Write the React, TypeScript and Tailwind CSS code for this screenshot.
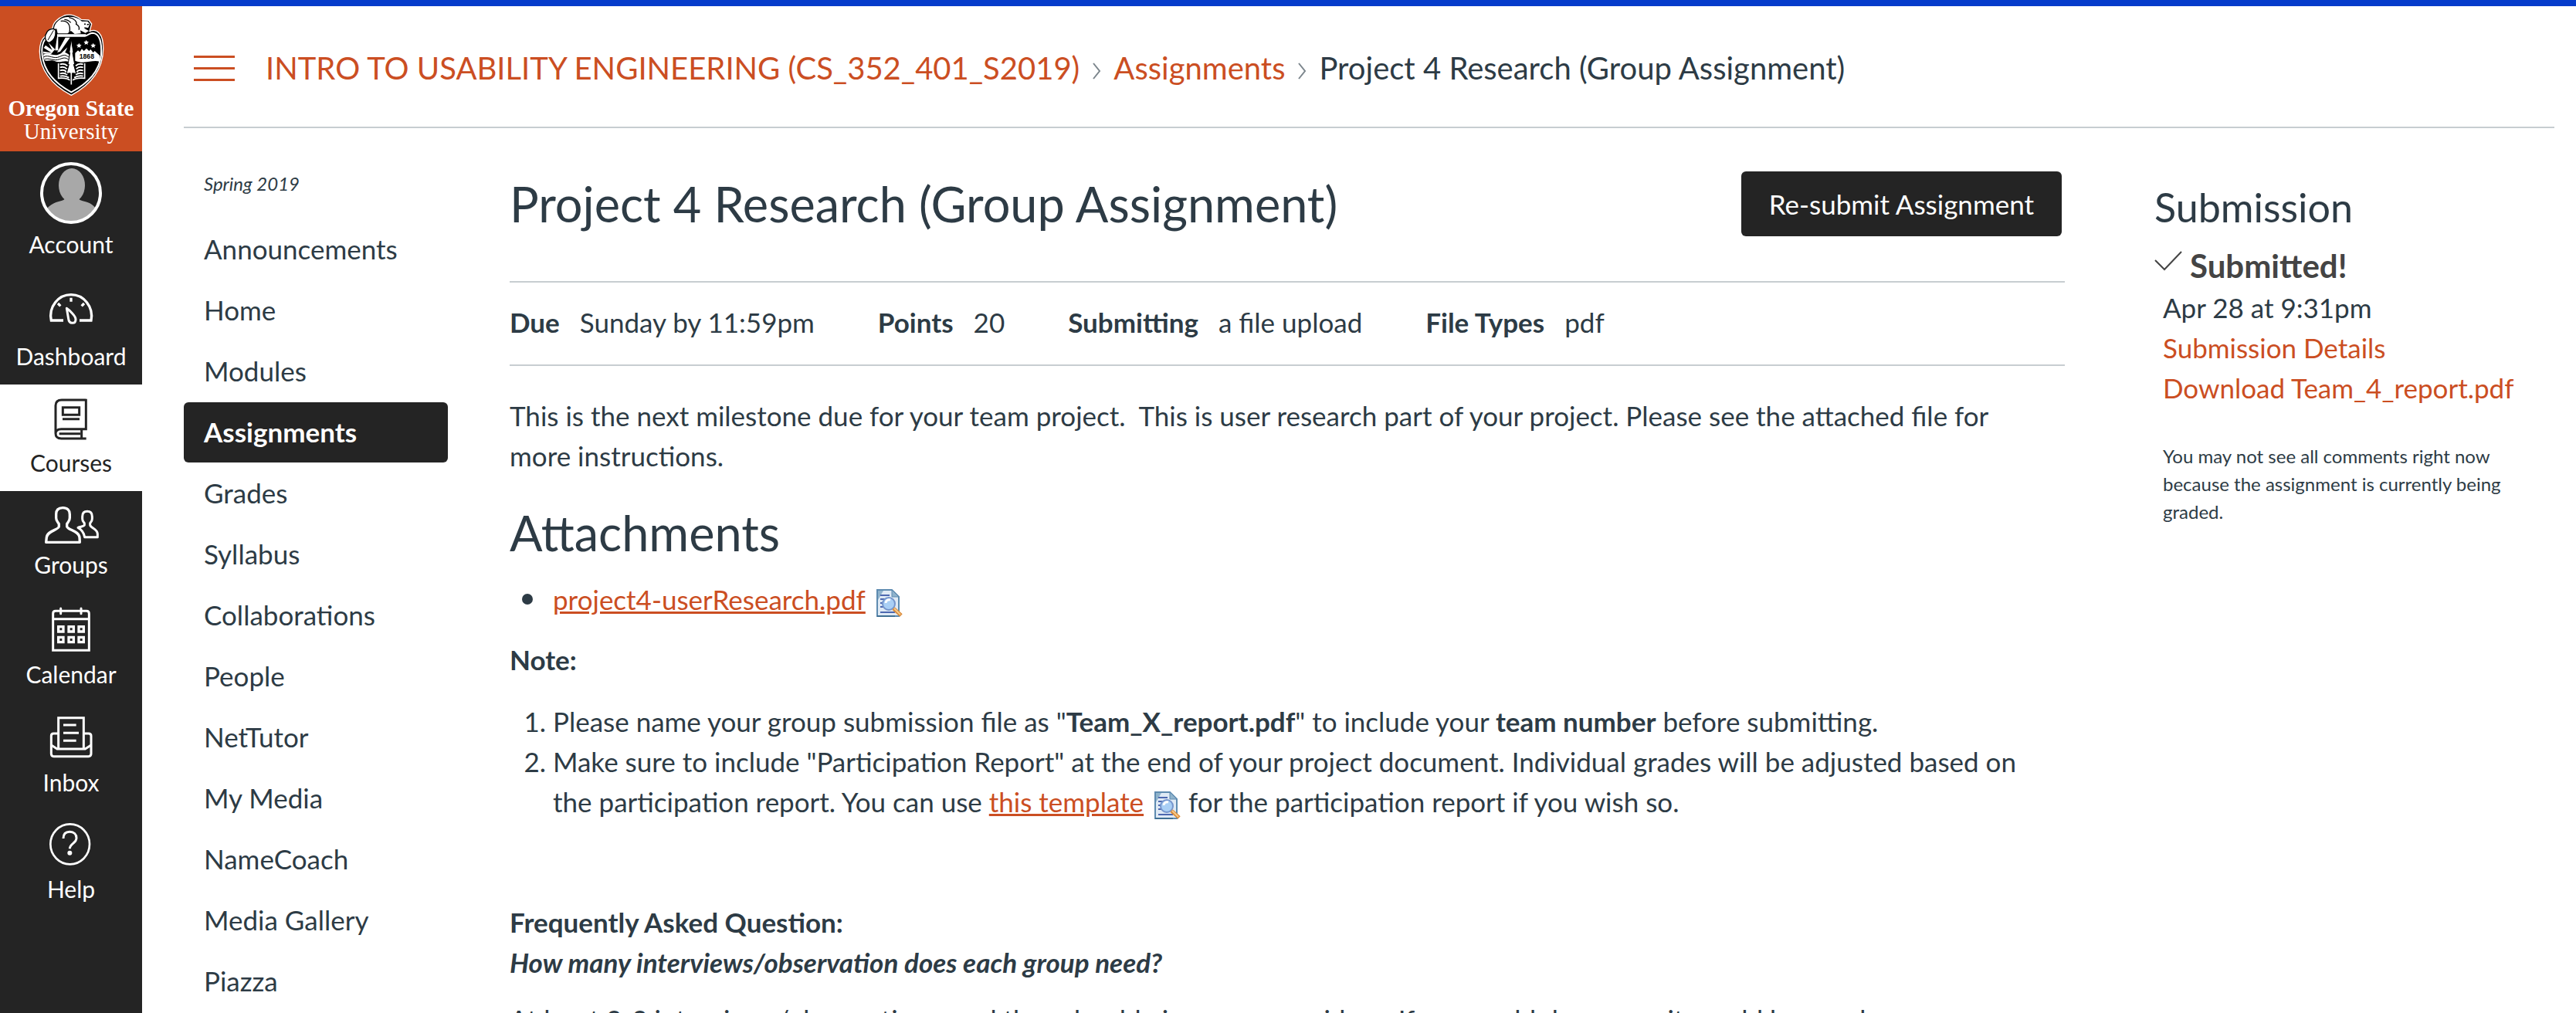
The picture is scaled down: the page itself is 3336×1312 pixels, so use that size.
import type { ReactNode } from 'react';

function Crest() {
  return (
    <svg viewBox="144 48 264 327" className="h-[109px] w-[88px] shrink-0" aria-hidden="true">
      <path d="M176 140 C182 125 195 112 205 108 C205 90 225 70 250 60 C275 53 300 62 315 76 L345 78 L356 93 L348 122 C375 110 402 128 401 190 C400 265 362 325 277 370 C195 328 155 265 154 200 C154 172 163 150 176 140 Z" fill="#000" stroke="#fff" strokeWidth="4" strokeLinejoin="round" />
      <path d="M176 152 C163 168 161 190 164 215 C172 280 215 325 277 358 C340 325 385 280 393 215 C396 165 388 130 360 128 C345 128 345 138 330 140 L222 140" fill="none" stroke="#fff" strokeWidth="6" />
      <path d="M210 113 C210 92 230 72 255 67 C285 60 308 72 318 83 L340 83 L349 93 L343 107 L330 112 L345 120 L332 128 L312 118 L314 130 L290 132 L276 120 L262 130 L224 130 L220 112 Z" fill="#fff" />
      <path d="M268 68 C290 72 300 85 296 94 C306 98 310 108 306 116 M236 82 C262 78 276 96 270 126 M250 76 C262 76 270 82 275 88" fill="none" stroke="#000" strokeWidth="4" />
      <circle cx="330" cy="94" r="3" fill="#000" />
      <path d="M346 94 l-8 2 M340 110 l-12 -2" stroke="#000" strokeWidth="4" />
      <path d="M184 122 C192 112 208 108 216 118 C218 140 208 158 192 166 C178 164 174 150 176 138 Z" fill="#fff" stroke="#000" strokeWidth="4" />
      <path d="M208 118 L186 156" stroke="#000" strokeWidth="3" />
      <path d="M222 136 H334" stroke="#fff" strokeWidth="6" />
      <path d="M222 142 L214 196 L226 196 L226 142 Z M272 146 L234 200 L222 204 L254 146 Z M177 176 L208 198 L202 206 L170 186 Z M188 166 L214 192 L206 200 Z M168 200 L200 205 L200 210 L168 208 Z M262 184 L238 206 L250 210 Z" fill="#fff" />
      <path d="M168 212 C190 200 208 222 232 210 S258 208 268 212 L268 240 C250 232 232 246 214 238 S184 240 172 234 Z" fill="#fff" />
      <path d="M170 221 C190 210 208 232 232 220 S258 218 268 222 M172 231 C190 222 208 240 232 230 S258 228 268 232" fill="none" stroke="#000" strokeWidth="3" />
      <path d="M292 206 L303 196 L310 202 L318 190 L326 198 L336 188 L346 198 L352 192 L362 204 L368 198 L388 216 L388 240 C360 230 330 252 292 236 Z" fill="#fff" />
      <text x="337" y="228" textAnchor="middle" fontSize="26" fontWeight="700" fill="#000" className="font-['Liberation_Sans',sans-serif]">1868</text>
      <path d="M335 155 l3 6 7 1 -5 5 1 7 -6 -4 -6 4 1 -7 -5 -5 7 -1 Z M307 167 l3 6 7 1 -5 5 1 7 -6 -4 -6 4 1 -7 -5 -5 7 -1 Z M362 167 l3 6 7 1 -5 5 1 7 -6 -4 -6 4 1 -7 -5 -5 7 -1 Z" fill="#fff" />
      <path d="M227 246 L227 304 C245 302 260 302 277 314 C294 302 310 302 329 304 L329 246" fill="none" stroke="#fff" strokeWidth="5" />
      <path d="M233 250 C246 246 256 250 262 256 M233 262 C246 258 254 262 260 268 M233 274 C246 270 254 274 258 280 M233 286 C246 282 256 286 262 290 M233 296 C246 292 258 296 268 302 M323 250 C310 246 300 250 294 256 M323 262 C310 258 302 262 296 268 M323 274 C310 270 302 274 298 280 M323 286 C310 282 300 286 294 290 M323 296 C310 292 298 296 288 302" fill="none" stroke="#fff" strokeWidth="6" />
      <path d="M277 152 L285 205 L282 205 L290 250 L286 250 L296 286 L281 284 L281 330 L273 330 L273 284 L258 286 L268 250 L264 250 L272 205 L269 205 Z" fill="#fff" stroke="#000" strokeWidth="3" />
    </svg>
  );
}

function DashboardIcon() {
  return (
    <svg viewBox="156 129 240 180" className="h-[60px] w-[80px]" fill="none" stroke="currentColor" strokeWidth="10" aria-hidden="true">
      <path d="M246 258 H199 C188 205 226 158 276 158 C326 158 364 205 354 258 H309" />
      <path d="M276 170 V185 M225 192 L235 202 M327 192 L317 202" />
      <path d="M259 211 C268 217 294 240 294 254 C294 264 288 268 281 268 C272 268 267 261 266 252 Z" strokeWidth="9" strokeLinejoin="round" />
    </svg>
  );
}

function CoursesIcon() {
  return (
    <svg viewBox="156 558 240 162" className="h-[54px] w-[80px]" fill="none" stroke="currentColor" strokeWidth="9" aria-hidden="true">
      <path d="M334 564 H240 C224 564 216 572 216 586 V694 C216 708 224 714 238 714 H335 M334 560 V677 H238 C224 677 216 684 216 695 M317 677 V714" />
      <path d="M244 593 H308 V622 H244 Z M243 638 H309 M230 695 H313" />
    </svg>
  );
}

function GroupsIcon() {
  return (
    <svg viewBox="156 972 240 144" className="h-[48px] w-[80px] overflow-visible" fill="none" stroke="currentColor" strokeWidth="10" strokeLinejoin="round" aria-hidden="true">
      <path d="M244 983 C226 983 218 993 218 1008 V1022 C218 1034 224 1038 229 1046 V1056 C226 1070 184 1072 181 1098 L179 1117 H310 L309 1098 C306 1072 264 1070 260 1056 V1046 C265 1038 271 1034 271 1022 V1008 C271 993 262 983 244 983 Z" />
      <path d="M339 997 C326 997 320 1005 320 1017 V1026 C320 1034 324 1037 328 1043 V1050 C326 1056 312 1056 303 1060 C318 1068 326 1080 329 1097 H379 V1084 C377 1064 352 1062 350 1050 V1043 C354 1037 358 1034 358 1026 V1017 C358 1005 352 997 339 997 Z" strokeWidth="9" />
    </svg>
  );
}

function CalendarIcon() {
  return (
    <svg viewBox="156 108 240 174" className="h-[58px] w-[80px]" fill="none" stroke="currentColor" strokeWidth="9" aria-hidden="true">
      <path d="M206 277 V134 C206 128 210 124 216 124 H336 C342 124 346 128 346 134 V277 Z M206 155 H346" />
      <path d="M236 114 V134 M315 114 V134" strokeLinecap="round" />
      <path d="M227 185 h19 v19 h-19 Z M267 185 h19 v19 h-19 Z M306 185 h19 v19 h-19 Z M227 226 h19 v19 h-19 Z M267 226 h19 v19 h-19 Z M306 226 h19 v19 h-19 Z" strokeWidth="10" />
    </svg>
  );
}

function InboxIcon() {
  return (
    <svg viewBox="156 534 240 168" className="h-[56px] w-[80px]" fill="none" stroke="currentColor" strokeWidth="9" aria-hidden="true">
      <path d="M227 660 V539 H325 V660 M227 600 H208 C202 600 199 604 199 609 V679 C199 685 202 689 208 689 H344 C350 689 354 685 354 679 V609 C354 604 350 600 344 600 H325" />
      <path d="M199 645 L222 660 H331 L354 645 M246 567 H296 M246 598 H306 M246 628 H296" />
    </svg>
  );
}

function HelpIcon() {
  return (
    <svg viewBox="156 954 240 162" className="h-[54px] w-[80px] overflow-visible" fill="none" stroke="currentColor" strokeWidth="8" aria-hidden="true">
      <ellipse cx="272" cy="1030" rx="76" ry="78" />
      <path d="M246 1008 C246 990 256 982 271 982 C287 982 297 992 297 1006 C297 1028 271 1026 271 1048" strokeWidth="9" />
      <circle cx="271" cy="1064" r="9" fill="currentColor" stroke="none" />
    </svg>
  );
}

function Avatar() {
  return (
    <svg viewBox="0 0 80 80" className="h-20 w-20" aria-hidden="true">
      <defs>
        <clipPath id="avatar-clip"><circle cx="40" cy="40" r="37" /></clipPath>
      </defs>
      <g clipPath="url(#avatar-clip)" fill="#a8a8a8">
        <ellipse cx="41" cy="30" rx="17" ry="22" />
        <path d="M33 42 H49 C49 50 52 49 58 51 C70 54 76 62 80 80 H0 C4 62 12 54 24 51 C30 49 33 50 33 42 Z" />
      </g>
      <circle cx="40" cy="40" r="38" fill="none" stroke="#fff" strokeWidth="4" />
    </svg>
  );
}

function PreviewIcon() {
  return (
    <svg viewBox="0 0 35 36" className="ml-3.5 inline-block h-9 w-[35px] align-middle" role="img" aria-label="Preview document">
      <path d="M1 1 H20 L29 10 V35 H1 Z" fill="#dfeaf5" stroke="#5e8bb0" strokeWidth="2" />
      <path d="M2 2 H9 L2 14 Z" fill="#8fb3cc" />
      <path d="M20 1 V10 H29 Z" fill="#8fb3cc" stroke="#5e8bb0" />
      <path d="M5 8 H17 M5 13 H14 M5 18 H11 M5 23 H12 M5 30 H24" stroke="#4d68b0" strokeWidth="2" />
      <circle cx="16" cy="19" r="8" fill="#a9cff5" stroke="#7595cc" strokeWidth="2" />
      <path d="M12 18 C12 15 15 13 18 14" stroke="#fff" strokeWidth="3" fill="none" />
      <path d="M22 25 L32 34" stroke="#d98a3a" strokeWidth="5" />
      <path d="M23 25 L31 33" stroke="#f6c988" strokeWidth="2" />
      <path d="M1 35 H24" stroke="#3f6f93" strokeWidth="2" />
    </svg>
  );
}

const globalNav: { label: string; icon: ReactNode; active?: boolean }[] = [
  { label: 'Dashboard', icon: <DashboardIcon /> },
  { label: 'Courses', icon: <CoursesIcon />, active: true },
  { label: 'Groups', icon: <GroupsIcon /> },
  { label: 'Calendar', icon: <CalendarIcon /> },
  { label: 'Inbox', icon: <InboxIcon /> },
  { label: 'Help', icon: <HelpIcon /> },
];

const courseNav = [
  'Announcements', 'Home', 'Modules', 'Assignments', 'Grades', 'Syllabus', 'Collaborations',
  'People', 'NetTutor', 'My Media', 'NameCoach', 'Media Gallery', 'Piazza',
];

const details = [
  ['Due', 'Sunday by 11:59pm'],
  ['Points', '20'],
  ['Submitting', 'a file upload'],
  ['File Types', 'pdf'],
];

function GlobalNav() {
  return (
    <nav aria-label="Global" className="w-[184px] shrink-0 bg-[#242424] text-[30px] leading-9 text-white">
      <a href="#home" className="flex h-[188px] flex-col items-center bg-[#cb4e22] pt-2 font-['Liberation_Serif',serif] text-[29px] leading-[30px]">
        <Crest />
        <span className="font-bold whitespace-nowrap">Oregon State</span>
        <span>University</span>
      </a>
      <a href="#account" className="flex flex-col items-center gap-2 pt-3.5 pb-5">
        <Avatar />
        Account
      </a>
      {globalNav.map((item) => (
        <a
          key={item.label}
          href={'#' + item.label.toLowerCase()}
          className={
            item.active
              ? 'flex flex-col items-center gap-[11px] bg-white pt-[18px] pb-[19px] text-[#242424]'
              : 'flex flex-col items-center gap-[11px] pt-[18px] pb-[19px]'
          }
        >
          {item.icon}
          {item.label}
        </a>
      ))}
    </nav>
  );
}

function Chevron() {
  return (
    <svg viewBox="0 0 12 22" className="mx-4 mt-2 h-[22px] w-3" fill="none" stroke="#7b858c" strokeWidth="2" aria-hidden="true">
      <path d="M2 1 L10 11 L2 21" />
    </svg>
  );
}

function Header() {
  return (
    <header className="flex h-[158px] items-center border-b-2 border-[#c7cdd1] pt-1 pl-[13px] text-[40px] leading-[52px]">
      <button type="button" aria-label="Toggle course navigation" className="mr-10 flex w-[53px] flex-col gap-3">
        <span className="h-[3px] bg-[#cb4e22]" />
        <span className="h-[3px] bg-[#cb4e22]" />
        <span className="h-[3px] bg-[#cb4e22]" />
      </button>
      <nav aria-label="Breadcrumb" className="flex items-center">
        <a href="#course" className="text-[#cb4e22]">INTRO TO USABILITY ENGINEERING (CS_352_401_S2019)</a>
        <Chevron />
        <a href="#assignments" className="text-[#cb4e22]">Assignments</a>
        <Chevron />
        <span>Project 4 Research (Group Assignment)</span>
      </nav>
    </header>
  );
}

function CourseNav() {
  return (
    <nav aria-label="Course" className="w-[342px] shrink-0 pt-[54px]">
      <p className="pl-[26px] text-[24px] leading-9 italic">Spring 2019</p>
      <ul className="mt-7 flex flex-col gap-px">
        {courseNav.map((label) => (
          <li key={label}>
            <a
              href={'#' + label}
              className={
                label === 'Assignments'
                  ? 'block rounded-md bg-[#242424] px-[26px] pt-3 pb-3.5 font-bold text-white'
                  : 'block px-[26px] pt-3 pb-3.5'
              }
            >
              {label}
            </a>
          </li>
        ))}
      </ul>
    </nav>
  );
}

function Assignment() {
  return (
    <main className="min-w-0 flex-1">
      <div className="flex h-[198px] items-start justify-between pt-14 pr-1">
        <h1 className="text-[63px] leading-[84px]">Project 4 Research (Group Assignment)</h1>
        <button type="button" className="h-[84px] rounded-md bg-[#242424] px-9 text-white">Re-submit Assignment</button>
      </div>
      <dl className="flex h-[110px] items-center gap-[82px] border-y-2 border-[#c7cdd1] pb-1">
        {details.map(([term, value]) => (
          <div key={term} className="flex gap-[26px]">
            <dt className="font-bold">{term}</dt>
            <dd>{value}</dd>
          </div>
        ))}
      </dl>
      <div className="pt-[38px] pr-9">
        <p>
          This is the next milestone due for your team project.&nbsp; This is user research part of your project. Please see the
          attached file for more instructions.
        </p>
        <h2 className="mt-8 text-[63px] leading-[84px]">Attachments</h2>
        <ul className="mt-[18px] pl-4">
          <li className="flex items-center">
            <span className="mr-[26px] h-3.5 w-3.5 rounded-full bg-[#2d3b45]" />
            <span>
              <a href="#file" className="text-[#cb4e22] underline">project4-userResearch.pdf</a>
              <PreviewIcon />
            </span>
          </li>
        </ul>
        <p className="mt-[26px] font-bold">Note:</p>
        <ol className="mt-7 list-decimal pl-14">
          <li>
            Please name your group submission file as "<strong>Team_X_report.pdf</strong>" to include your <strong>team number</strong> before submitting.
          </li>
          <li>
            Make sure to include "Participation Report" at the end of your project document. Individual grades will be adjusted
            based on the participation report. You can use <a href="#template" className="text-[#cb4e22] underline">this template</a>
            <PreviewIcon /> for the participation report if you wish so.
          </li>
        </ol>
        <h3 className="mt-[104px] font-bold">Frequently Asked Question:</h3>
        <p className="font-bold italic">How many interviews/observation does each group need?</p>
        <p className="mt-[22px]">
          At least 2-3 interviews/observations, and they should give you some ideas. If you could do more... it would be good.
        </p>
      </div>
    </main>
  );
}

function Submission() {
  return (
    <aside className="ml-[116px] w-[518px] shrink-0 pt-[68px]">
      <h2 className="text-[52px] leading-[68px]">Submission</h2>
      <div className="mt-4 flex h-[52px] items-center gap-2.5 text-[42px] font-bold text-[#444]">
        <svg viewBox="0 0 36 26" className="mb-3 h-[26px] w-9" fill="none" stroke="currentColor" strokeWidth="2" aria-hidden="true">
          <path d="M1 12 L13 24 L35 1" />
        </svg>
        Submitted!
      </div>
      <div className="pt-0.5 pl-[11px]">
        <p>Apr 28 at 9:31pm</p>
        <a href="#details" className="block text-[#cb4e22]">Submission Details</a>
        <a href="#download" className="block text-[#cb4e22]">Download Team_4_report.pdf</a>
        <p className="mt-[45px] text-[24px] leading-9">
          You may not see all comments right now because the assignment is currently being graded.
        </p>
      </div>
    </aside>
  );
}

export default function App() {
  return (
    <div className="flex h-screen flex-col overflow-hidden bg-white font-['Lato',sans-serif] text-[35px] leading-[52px] text-[#2d3b45]">
      <div className="h-2 shrink-0 bg-[#053ccb]" />
      <div className="flex min-h-0 flex-1">
        <GlobalNav />
        <div className="min-w-0 flex-1 pr-7 pl-[54px]">
          <Header />
          <div className="flex">
            <CourseNav />
            <div className="ml-20 flex min-w-0 flex-1">
              <Assignment />
              <Submission />
            </div>
          </div>
        </div>
      </div>
    </div>
  );
}
